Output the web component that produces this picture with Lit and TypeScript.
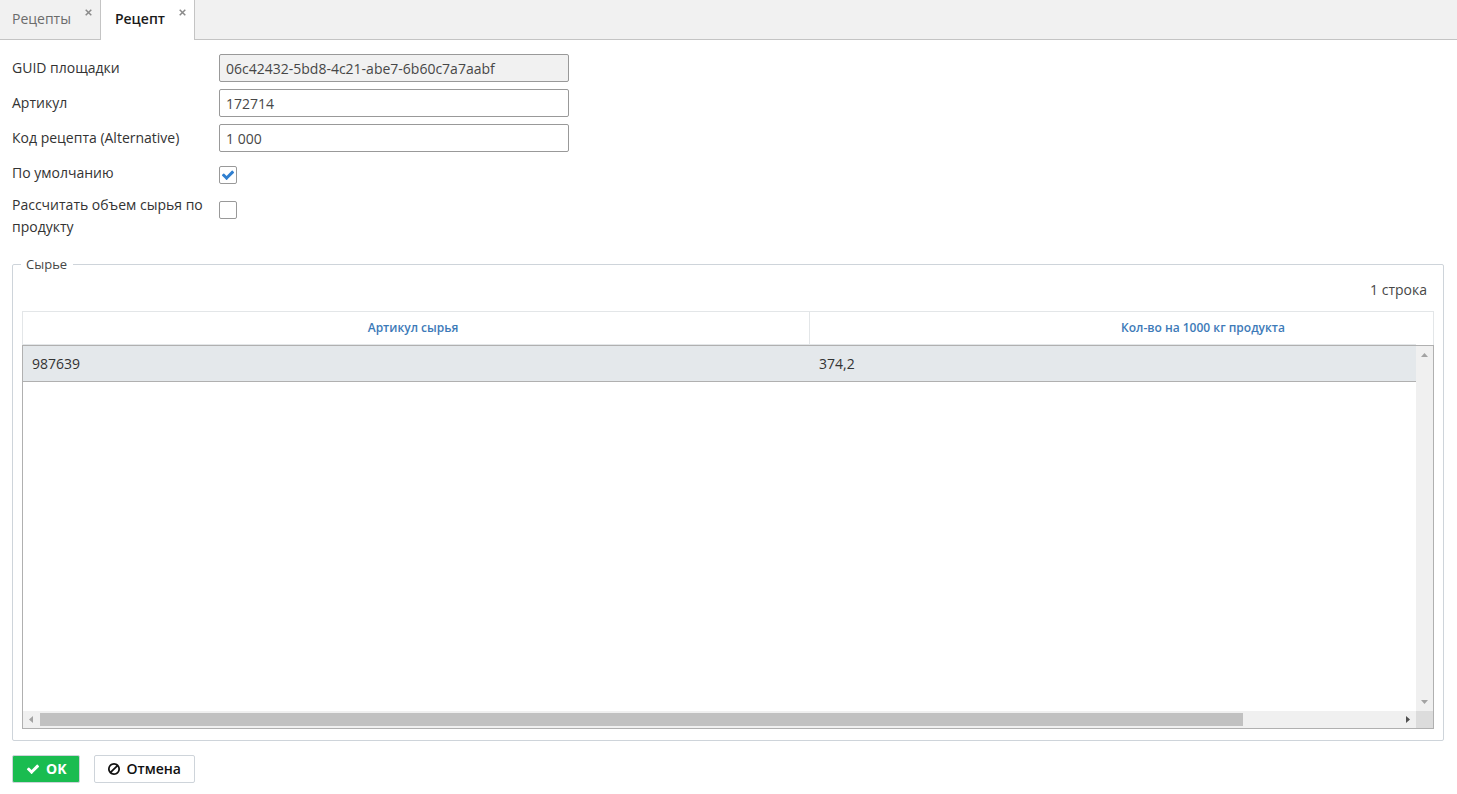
import { LitElement, html, css, svg } from "lit";
import { customElement, state } from "lit/decorators.js";

const checkPath =
  "M1671 566q0 40-28 68l-724 724-136 136q-28 28-68 28t-68-28l-136-136-362-362q-28-28-28-68t28-68l136-136q28-28 68-28t68 28l294 295 656-657q28-28 68-28t68 28l136 136q28 28 28 68z";
const banPath =
  "M1440 893q0-161-87-295l-754 753q137 89 297 89 111 0 211.500-43.500t173.500-116.500 116-174.500 43-212.500zm-999 299l755-754q-135-91-300-91-148 0-273 73t-198 199-73 274q0 162 89 299zm1223-299q0 157-61 300t-163.500 246-245 164-298.500 61-298.500-61-245-164-163.500-246-61-300 61-299.500 163.500-245.500 245-164 298.500-61 298.500 61 245 164 163.500 245.500 61 299.500z";

const checkIcon = html`
  <svg class="icon" viewBox="0 0 1792 1792" aria-hidden="true">${svg`<path d=${checkPath}></path>`}</svg>
`;

const banIcon = html`
  <svg class="icon narrow" viewBox="128 0 1536 1792" aria-hidden="true">${svg`<path d=${banPath}></path>`}</svg>
`;

const closeIcon = html`
  <svg class="cross" viewBox="0 0 7 7" aria-hidden="true"><path d="M0.700 0.700L6.300 6.300M6.300 0.700L0.700 6.300"></path></svg>
`;

@customElement("app-root")
export class AppRoot extends LitElement {
  @state() private tabs = ["Рецепты", "Рецепт"];
  @state() private active = 1;
  @state() private rows = [{ article: "987639", amount: "374,2" }];

  static styles = css`
    :host {
      display: block;
      font-family: "Open Sans", "Noto Sans", sans-serif;
      font-size: 14px;
      line-height: 22px;
      color: #333;
    }
    * {
      box-sizing: border-box;
    }
    button,
    input {
      font: inherit;
      margin: 0;
    }
    .page {
      display: flex;
      flex-direction: column;
      height: 100vh;
      min-height: 560px;
      background: #fff;
    }

    .tabs {
      display: flex;
      height: 40px;
      background: #f1f1f1;
      box-shadow: inset 0 -1px #c4c4c4;
    }
    .tab {
      display: flex;
      align-items: flex-start;
      gap: 14px;
      padding: 8px 8px 0 14px;
      border-right: 1px solid #c4c4c4;
      color: #6b6b6b;
    }
    .tab:first-child {
      padding-left: 12px;
    }
    .tab.active {
      background: #fff;
      color: #1b1b1b;
      font-weight: 600;
    }
    .tab-name,
    .close {
      padding: 0;
      border: 0;
      background: none;
      color: inherit;
    }
    .close {
      display: flex;
      padding-top: 1px;
      color: #8a8a8a;
    }
    .cross {
      width: 7px;
      height: 7px;
      fill: none;
      stroke: currentColor;
      stroke-width: 1.5;
    }

    .content {
      flex: 1;
      display: flex;
      flex-direction: column;
      min-height: 0;
      padding: 14px 13px 11px 12px;
    }
    .form {
      display: grid;
      grid-template-columns: 200px 350px;
      grid-auto-rows: minmax(28px, auto);
      gap: 7px;
      align-items: start;
    }
    .label {
      padding-top: 3px;
    }
    .label.long {
      padding-top: 0;
    }
    .text {
      width: 100%;
      height: 28px;
      padding: 0 6px;
      border: 1px solid #999;
      border-radius: 2px;
      background: #fff;
      color: #474747;
      outline: none;
    }
    .text:read-only {
      background: #f1f1f1;
    }
    .check {
      display: grid;
      width: 18px;
      height: 18px;
      margin-top: 7px;
    }
    .check input {
      grid-area: 1 / 1;
      appearance: none;
      width: 18px;
      height: 18px;
      border: 1px solid #999;
      border-radius: 2px;
      background: #fff;
    }
    .check .icon {
      grid-area: 1 / 1;
      place-self: center;
      width: 14px;
      height: 14px;
      fill: #2f7fd0;
      visibility: hidden;
      pointer-events: none;
    }
    .check input:checked + .icon {
      visibility: visible;
    }

    .group {
      flex: 1;
      display: grid;
      grid-template-rows: auto minmax(0, 1fr);
      min-width: 0;
      margin: 17px 0 0;
      padding: 6px 9px 11px;
      border: 1px solid #ced4da;
      border-radius: 2px;
    }
    .legend {
      margin-left: -1px;
      padding: 0 6px 0 5px;
      font-size: 13px;
      line-height: 18px;
      color: #474747;
    }
    .count {
      padding-right: 7px;
      text-align: right;
      color: #474747;
    }
    .grid {
      display: grid;
      grid-template-columns: minmax(0, 1fr) 18px;
      grid-template-rows: 34px minmax(0, 1fr) 18px;
      margin-top: 10px;
    }
    .view {
      grid-area: 1 / 1 / 3 / 2;
      overflow: hidden;
    }
    .data {
      width: calc(100% + 180px);
      table-layout: fixed;
      border-collapse: separate;
      border-spacing: 0;
    }
    .data th {
      height: 34px;
      padding: 0 10px;
      border: solid #e3e6e8;
      border-width: 1px 0 1px 1px;
      font-size: 12px;
      line-height: 18px;
      font-weight: 600;
      color: #3d7ab8;
    }
    .data th:first-child {
      padding-right: 16px;
    }
    .data td {
      height: 37px;
      padding: 1px 10px 0;
      border-bottom: 1px solid #b0b0b0;
      background: #e4e8eb;
    }
    .corner-head {
      grid-area: 1 / 2;
      border: solid #e3e6e8;
      border-width: 1px 1px 0 0;
    }
    .frame {
      grid-area: 2 / 1 / 4 / 3;
      border: 1px solid #b0b0b0;
      pointer-events: none;
    }
    .bar {
      display: flex;
      align-items: center;
      justify-content: space-between;
      background: #f0f0f0;
    }
    .bar.vertical {
      grid-area: 2 / 2;
      flex-direction: column;
      margin: 1px 1px 0 0;
      padding: 7px 0;
    }
    .bar.horizontal {
      grid-area: 3 / 1;
      margin: 0 0 1px 1px;
      padding: 0 6px;
    }
    .track {
      flex: 1;
      margin: 0 7px;
    }
    .thumb {
      width: 88.5%;
      height: 13px;
      background: #c1c1c1;
    }
    .corner {
      grid-area: 3 / 2;
      margin: 0 1px 1px 0;
      background: #dcdcdc;
    }
    .arrow {
      display: block;
      fill: #a3a3a3;
    }
    .arrow.enabled {
      fill: #505050;
    }

    .actions {
      display: flex;
      gap: 14px;
      margin-top: 14px;
    }
    .button {
      display: flex;
      align-items: center;
      gap: 6px;
      height: 28px;
      padding: 0 13px;
      border: 1px solid #ced4da;
      border-radius: 2px;
      background: #fff;
      color: #111;
      font-weight: 600;
    }
    .button .icon {
      width: 14px;
      height: 14px;
      fill: currentColor;
    }
    .button .narrow {
      width: 12px;
    }
    .button.primary {
      background: #1abc50;
      color: #fff;
      font-weight: 700;
    }
  `;

  private renderTab(name: string, index: number) {
    const selected = index === this.active;
    return html`
      <div class="tab ${selected ? "active" : ""}">
        <button class="tab-name" @click=${() => (this.active = index)}>${name}</button>
        <button class="close" aria-label="Закрыть">${closeIcon}</button>
      </div>
    `;
  }

  render() {
    return html`
      <div class="page">
        <nav class="tabs">${this.tabs.map((name, i) => this.renderTab(name, i))}</nav>
        <main class="content">
          <div class="form">
            <label class="label" for="guid">GUID площадки</label>
            <input class="text" id="guid" type="text" readonly .value=${"06c42432-5bd8-4c21-abe7-6b60c7a7aabf"} />
            <label class="label" for="article">Артикул</label>
            <input class="text" id="article" type="text" .value=${"172714"} />
            <label class="label" for="code">Код рецепта (Alternative)</label>
            <input class="text" id="code" type="text" .value=${"1 000"} />
            <label class="label" for="default">По умолчанию</label>
            <span class="check"><input id="default" type="checkbox" checked />${checkIcon}</span>
            <label class="label long" for="calc">Рассчитать объем сырья по продукту</label>
            <span class="check"><input id="calc" type="checkbox" />${checkIcon}</span>
          </div>

          <fieldset class="group">
            <legend class="legend">Сырье</legend>
            <div class="count">1 строка</div>
            <div class="grid">
              <div class="view">
                <table class="data">
                  <thead>
                    <tr>
                      <th scope="col">Артикул сырья</th>
                      <th scope="col">Кол-во на 1000 кг продукта</th>
                    </tr>
                  </thead>
                  <tbody>
                    ${this.rows.map((row) => html`<tr><td>${row.article}</td><td>${row.amount}</td></tr>`)}
                  </tbody>
                </table>
              </div>
              <div class="corner-head"></div>
              <div class="bar vertical">
                <svg class="arrow" width="7" height="4" viewBox="0 0 7 4"><path d="M0 4L3.500 0L7 4z"></path></svg>
                <svg class="arrow" width="7" height="4" viewBox="0 0 7 4"><path d="M0 0L3.500 4L7 0z"></path></svg>
              </div>
              <div class="bar horizontal">
                <svg class="arrow" width="4" height="7" viewBox="0 0 4 7"><path d="M4 0L0 3.500L4 7z"></path></svg>
                <div class="track"><div class="thumb"></div></div>
                <svg class="arrow enabled" width="4" height="7" viewBox="0 0 4 7"><path d="M0 0L4 3.500L0 7z"></path></svg>
              </div>
              <div class="corner"></div>
              <div class="frame"></div>
            </div>
          </fieldset>

          <div class="actions">
            <button class="button primary">${checkIcon}OK</button>
            <button class="button">${banIcon}Отмена</button>
          </div>
        </main>
      </div>
    `;
  }
}
